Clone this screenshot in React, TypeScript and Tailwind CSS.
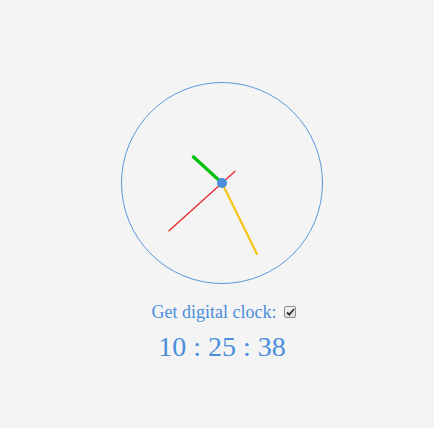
import React from "react";

// fixed time shown in the picture: 10:25:38
const time = { h: 10, m: 25, s: 38 };

const pad = (n: number) => String(n).padStart(2, "0");

const Hand = ({
  angle,
  length,
  tail,
  width,
  color,
}: {
  angle: number;
  length: number;
  tail: number;
  width: number;
  color: string;
}) => {
  const rad = (angle * Math.PI) / 180;
  const x1 = 100 - Math.sin(rad) * tail;
  const y1 = 100 + Math.cos(rad) * tail;
  const x2 = 100 + Math.sin(rad) * length;
  const y2 = 100 - Math.cos(rad) * length;
  return <line x1={x1} y1={y1} x2={x2} y2={y2} stroke={color} strokeWidth={width} />;
};

const App = () => {
  const hourAngle = (time.h % 12) * 30 + time.m * 0.5;
  const minuteAngle = time.m * 6 + time.s * 0.1;
  const secondAngle = time.s * 6;

  return (
    <div className="min-h-[428px] w-full bg-[#f4f4f4] font-['Liberation_Serif',serif] text-[#4a8edb]">
      <div className="flex flex-col items-center pl-[10px] pt-[82px]">
        <div className="h-[202px] w-[202px] rounded-full border border-[#5b97dd]">
          <svg width="200" height="200" viewBox="0 0 200 200">
            <Hand angle={secondAngle} length={72} tail={18} width={1.3} color="#e8262a" />
            <Hand angle={minuteAngle} length={80} tail={0} width={2.2} color="#f5c518" />
            <Hand angle={hourAngle} length={40} tail={0} width={3.2} color="#00c010" />
            <circle cx="100" cy="100" r="5" fill="#4a8edb" />
          </svg>
        </div>

        <label className="mt-[17px] flex items-center pl-[4px] text-[18px] leading-[22px]">
          Get digital clock:
          <span className="ml-[8px] flex h-[12px] w-[12px] items-center justify-center rounded-[2px] border border-[#8c8c8c] bg-[linear-gradient(#f6f6f6,#dcdcdc)]">
            <svg width="9" height="8" viewBox="0 0 9 8">
              <path d="M1 4.5 L3.3 6.6 L8 1" fill="none" stroke="#333" strokeWidth="1.8" />
            </svg>
          </span>
        </label>

        <div className="mt-[8px] text-[28px] leading-[32px]">
          {pad(time.h)} : {pad(time.m)} : {pad(time.s)}
        </div>
      </div>
    </div>
  );
};

export default App;
